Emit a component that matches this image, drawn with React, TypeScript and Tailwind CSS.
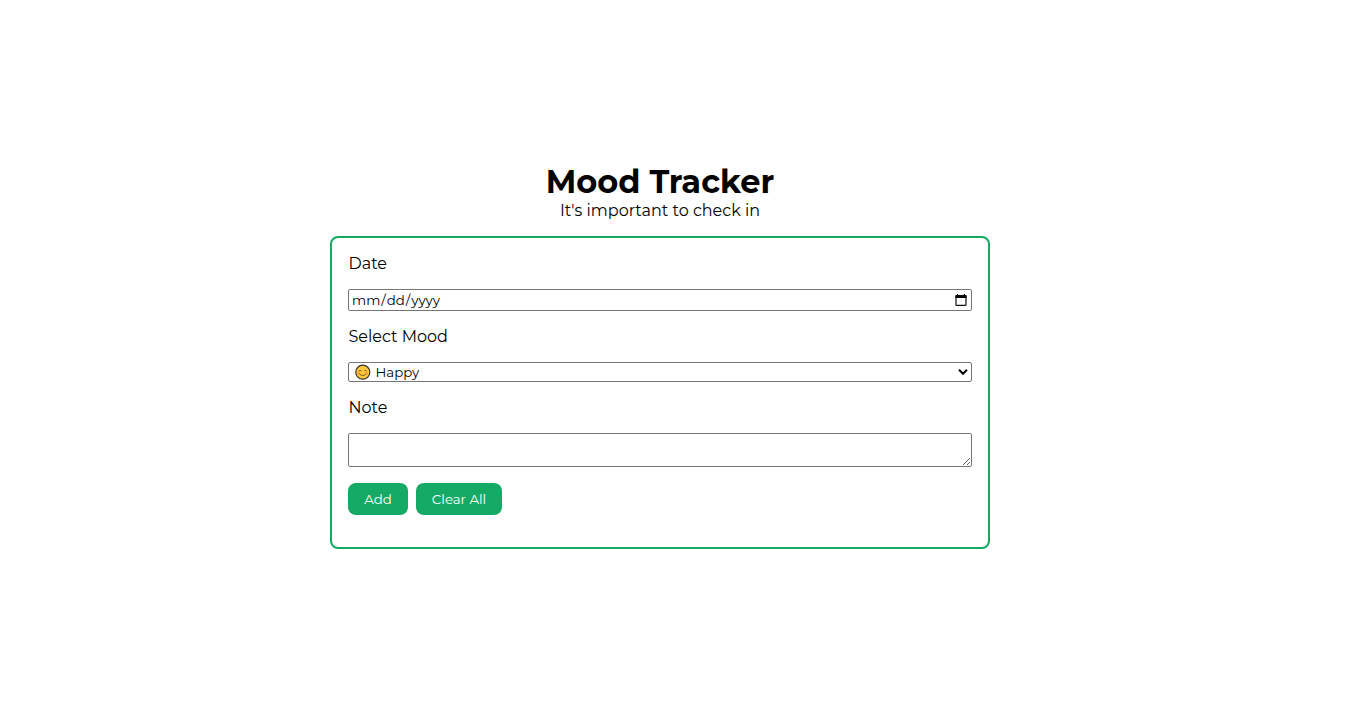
import React from "react";

function CalendarIcon() {
  return (
    <svg width="12" height="12" viewBox="0 0 12 12" aria-hidden="true">
      <path d="M1 1h10a.6.6 0 0 1 .6.6V4H.4V1.6A.6.6 0 0 1 1 1zM2 0h1.2v1.4H2zM8.8 0H10v1.4H8.8z" fill="#000" />
      <rect x="1" y="2" width="10" height="9.3" rx=".6" fill="none" stroke="#111" strokeWidth="1.2" />
    </svg>
  );
}

function SmileIcon() {
  return (
    <svg width="16" height="16" viewBox="0 0 16 16" fill="none" strokeLinecap="round" aria-hidden="true">
      <circle cx="7.8" cy="8.2" r="7" fill="#ffc83d" stroke="#35322d" strokeWidth="1.2" />
      <circle cx="3.9" cy="9.5" r="1.3" fill="#ff9340" />
      <circle cx="11.7" cy="9.5" r="1.3" fill="#ff9340" />
      <path d="M3.9 6.9q1.2-1.6 2.4 0M9.3 6.9q1.2-1.6 2.4 0M4.8 10.2q3 3 6 0" stroke="#5a4020" strokeWidth="0.8" />
    </svg>
  );
}

export default function App() {
  return (
    <main className="flex h-[711px] w-[1320px] flex-col items-center bg-white pt-[161px] font-['Montserrat','Inter',sans-serif] text-base text-black">
      <h1 className="h-10 whitespace-nowrap text-[32px] font-bold leading-[41px]">Mood Tracker</h1>
      <p className="h-[35px] whitespace-nowrap leading-5">It's important to check in</p>
      <form className="flex h-[313px] w-[660px] flex-col rounded-lg border-2 border-[#14a965] p-4">
        <label className="h-5 pl-[0.5px] leading-[19px]">Date</label>
        <div className="mt-[15px] flex h-[22px] items-center justify-between rounded-[2px] border border-[#767676] pl-0.5 pr-1">
          <span className="flex text-[13.333px] leading-5">
            <span className="px-px">mm</span>/<span className="px-px">dd</span>/<span className="px-px">yyyy</span>
          </span>
          <CalendarIcon />
        </div>
        <label className="mt-4 h-5 pl-[0.5px] leading-[19px]">Select Mood</label>
        <div className="mt-[15px] flex h-5 items-center rounded-[2px] border border-[#767676] pl-1.5 pr-[3px]">
          <SmileIcon />
          <span className="ml-1 pl-[0.5px] text-[13.333px] leading-[18px]">Happy</span>
          <svg className="ml-auto" width="10" height="6" viewBox="0 0 10 6" fill="none" aria-hidden="true">
            <path d="M1 .8l4 4 4-4" stroke="#000" strokeWidth="2" />
          </svg>
        </div>
        <label className="mt-4 h-5 pl-[0.5px] leading-[19px]">Note</label>
        <textarea className="mt-[15px] block h-[34px] shrink-0 resize rounded-[2px] border border-[#767676] p-0.5 text-[13.333px]" />
        <div className="mt-4 flex gap-2 text-[13.333px] text-white">
          <button type="button" className="h-8 w-[60px] rounded-lg bg-[#14a965] pt-px">Add</button>
          <button type="button" className="h-8 w-[86px] rounded-lg bg-[#14a965] pt-px">Clear All</button>
        </div>
      </form>
    </main>
  );
}
